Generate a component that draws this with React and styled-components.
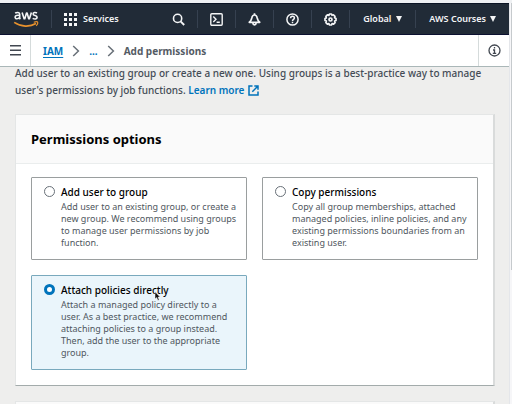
import React, { useState } from 'react';
import styled, { createGlobalStyle } from 'styled-components';

const GlobalStyle = createGlobalStyle`
  *, *::before, *::after { box-sizing: border-box; }
  html { overflow: hidden; }
  body {
    margin: 0;
    background: #eeeeed;
    color: #000;
    font-family: "Noto Sans", "Open Sans", sans-serif;
  }
  button, input { font: inherit; margin: 0; }
`;

const Frame = styled.div`
  min-height: 100vh;
  border-top: 3px solid #eff1f3;
  display: grid;
  grid-template-columns: minmax(0, 1fr) 3px;
`;

const Gutter = styled.div`
  background: linear-gradient(#c6cacd, #c6cacd) right top / 1px 267px no-repeat, #f6f6f8;
  border-left: 1px solid #e4e6ea;
`;

const Page = styled.div`
  display: flex;
  flex-direction: column;
`;

const TopNav = styled.nav`
  display: flex;
  align-items: center;
  height: 32px;
  background: #212b37;
  border-top: 1px solid #0b1424;
  border-bottom: 1px solid #0b1030;
  color: #f4f5f6;
`;

const NavButton = styled.button`
  display: flex;
  align-items: center;
  justify-content: center;
  gap: ${(p) => p.$gap || 0}px;
  height: 18px;
  padding: 0 ${(p) => p.$pad || 0}px;
  min-width: 38px;
  border: 0;
  border-left: ${(p) => (p.$divided ? '1px solid #364150' : '0')};
  background: none;
  color: inherit;
  font-size: 9px;
  line-height: 18px;
  font-weight: 600;
  white-space: nowrap;
`;

const LogoLink = styled.a`
  display: flex;
  justify-content: center;
  width: 51px;
  color: #f4f5f6;
`;

const Spacer = styled.div`
  flex: 1;
`;

const Caret = styled.span`
  border: 3px solid transparent;
  border-top: 6px solid currentColor;
  border-bottom: 0;
`;

const CrumbBar = styled.header`
  display: flex;
  align-items: stretch;
  position: relative;
  z-index: 1;
  height: 32px;
  background: #fff;
  border-bottom: 1px solid #aab7b8;
`;

const BarButton = styled.button`
  display: flex;
  align-items: center;
  justify-content: center;
  width: 31px;
  padding: 0;
  border: 0;
  border-${(p) => p.$edge}: 1px solid #d5dbdb;
  background: none;
  color: #414750;
`;

const Crumbs = styled.ol`
  flex: 1;
  display: flex;
  align-items: center;
  gap: 9px;
  margin: 0;
  padding: 0 12px;
  list-style: none;
  color: #545b64;
  font-size: 10px;
  line-height: 16px;
  font-weight: 700;

  li { display: flex; align-items: center; gap: 9px; }
`;

const CrumbLink = styled.a`
  color: #0073bb;
  text-decoration: ${(p) => (p.$underlined ? 'underline' : 'none')};
  text-underline-offset: 2px;
`;

const Main = styled.main`
  display: flex;
  flex-direction: column;
  gap: 15px;
  margin-top: -2px;
  padding: 0 14px 0 15px;
`;

const Intro = styled.p`
  margin: 0;
  color: #444c56;
  font-size: 10px;
  line-height: 17px;
  font-weight: 500;
`;

const LearnMore = styled.a`
  color: #0073bb;
  font-weight: 600;
  text-decoration: none;
  svg { vertical-align: -2px; margin-left: 4px; }
`;

const Card = styled.section`
  background: #fff;
  border: 1px solid #e4e6e6;
  border-right: 2px solid #d9dbdb;
  border-bottom: 1px solid #a3abab;
`;

const CardHeader = styled.div`
  padding: 15px;
  background: #fafafa;
  border-bottom: 1px solid #eaeded;
`;

const CardTitle = styled.h2`
  margin: 0;
  font-size: 13px;
  line-height: 18px;
  font-weight: 700;
`;

const OptionGrid = styled.div`
  display: grid;
  grid-template-columns: 1fr 1fr;
  gap: 15px;
  padding: 13px 15px 15px;
`;

const Option = styled.label`
  display: grid;
  grid-template-columns: 11px 1fr;
  column-gap: 6px;
  padding: 6px 8px 10px 12px;
  border: 1px solid ${(p) => (p.$selected ? '#79a9bd' : '#9a9e9f')};
  border-radius: 1px;
  background: ${(p) => (p.$selected ? '#eaf5fb' : '#fff')};
`;

const Radio = styled.input`
  appearance: none;
  width: 11px;
  height: 11px;
  border: 1px solid #687078;
  border-radius: 50%;
  background: #fff;
  &[type='radio'] { margin: 2px 0 0; }
  &:checked { border: 3px solid #0073bb; }
`;

const OptionText = styled.span`
  display: flex;
  flex-direction: column;
  gap: 1px;
`;

const OptionLabel = styled.span`
  font-size: 10px;
  line-height: 16px;
  font-weight: 500;
`;

const OptionDescription = styled.span`
  color: #4f5760;
  font-size: 9px;
  line-height: 12px;
`;

const Pointer = styled.svg`
  position: absolute;
  left: 154px;
  top: 291px;
  pointer-events: none;
`;

const AwsLogo = () => (
  <svg width="26" height="17" viewBox="0 0 26 17" fill="none" aria-label="aws" role="img">
    <g stroke="currentColor" strokeWidth="1.6" strokeLinejoin="round">
      <path d="M2.1 2.2C3.7 1.1 6.6 1 6.7 3.2V7.3L7.3 8.2M6.7 4.5C4.4 4 2.2 4.4 2.1 6.1C2 8.4 5.6 8.3 6.7 6.2" />
      <path d="M9.1 1.4L11.1 7.8H11.8L13.5 2H14.1L15.7 7.8H16.4L18.4 1.4" />
      <path d="M24 2C22.4 1.1 20.1 1.4 20.1 3C20.1 5 24.1 4.2 24.1 6.3C24.1 8.4 21.3 8.3 19.7 7.4" />
    </g>
    <path d="M1.2 11.4C8 16 16.7 16.2 23 12.6" stroke="#e8922e" strokeWidth="1.7" />
    <path d="M20.8 11.3C22.5 10.7 24.5 10.8 24.7 11.2C24.9 11.8 24.4 13.7 23.2 14.8" stroke="#e8922e" strokeWidth="1.2" />
  </svg>
);

const GridIcon = () => (
  <svg width="13" height="13" viewBox="0 0 13 13" fill="currentColor" aria-hidden="true">
    {[0, 5, 10].map((y) => [0, 5, 10].map((x) => <rect key={`${x}-${y}`} x={x} y={y} width="3" height="3" />))}
  </svg>
);

const Glyph = ({ size = 13, weight = 1.6, children }) => (
  <svg width={size} height={size} viewBox="0 0 13 13" fill="none" stroke="currentColor" strokeWidth={weight} aria-hidden="true">
    {children}
  </svg>
);

const SearchIcon = () => (
  <Glyph><circle cx="5.6" cy="5.4" r="4.1" /><path d="M8.6 8.4L12.2 12" strokeWidth="1.9" /></Glyph>
);
const TerminalIcon = () => (
  <Glyph weight={1.4}><rect x="0.8" y="0.8" width="11.4" height="11.4" rx="1" /><path d="M3.3 3.6L6 6.3L3.3 9M6.6 9.3H9.8" /></Glyph>
);
const BellIcon = () => (
  <Glyph weight={1.7}><path d="M6.5 0.3V2M1.3 9.3C3.4 7.8 3.4 6.5 3.8 4.9C4.2 3 5.2 2 6.5 2C7.8 2 8.8 3 9.2 4.9C9.6 6.5 9.6 7.8 11.7 9.3Z" strokeLinejoin="round" /><path d="M4.9 10C5 12.4 8 12.4 8.1 10" /></Glyph>
);
const HelpIcon = () => (
  <Glyph weight={1.5}><circle cx="6.5" cy="6.5" r="5.6" /><path d="M4.6 5.2C4.6 2.7 8.4 2.7 8.4 5C8.4 6.4 6.5 6.3 6.5 8M6.5 8.8V10.2" /></Glyph>
);
const GearIcon = () => (
  <Glyph weight={1.7}>
    <path d="M5.5 1H7.5L8 2.3L9.4 1.8L11 3.4L10.6 4.8L12 5.5V7.5L10.6 8.1L11.1 9.6L9.6 11.1L8.1 10.6L7.5 12H5.5L4.9 10.6L3.4 11.1L1.9 9.6L2.4 8.1L1 7.5V5.5L2.3 4.9L1.9 3.4L3.4 1.9L4.9 2.4Z" strokeLinejoin="round" />
    <circle cx="6.5" cy="6.5" r="1.5" />
  </Glyph>
);
const MenuIcon = () => (
  <Glyph><path d="M1 1.8H12M1 6.3H12M1 10.8H12" /></Glyph>
);
const InfoIcon = () => (
  <Glyph weight={1.3}><circle cx="6.5" cy="6.5" r="5.5" /><path d="M6.5 3V4.5M5 6H6.5V9.3M4.8 9.4H8.2" /></Glyph>
);
const Chevron = () => (
  <svg width="8" height="12" viewBox="0 0 8 12" fill="none" stroke="#687078" strokeWidth="1.5" aria-hidden="true">
    <path d="M1.2 1L6.4 6L1.2 11" />
  </svg>
);
const ExternalIcon = () => (
  <svg width="11" height="11" viewBox="0 0 11 11" fill="none" stroke="currentColor" strokeWidth="1.5" aria-hidden="true">
    <path d="M4.5 1H1V10H10V6.5M6.3 1H10V4.7M10 1L4.3 6.7" />
  </svg>
);

const OPTIONS = [
  { id: 'group', label: 'Add user to group', text: 'Add user to an existing group, or create a new group. We recommend using groups to manage user permissions by job function.' },
  { id: 'copy', label: 'Copy permissions', text: 'Copy all group memberships, attached managed policies, inline policies, and any existing permissions boundaries from an existing user.' },
  { id: 'attach', label: 'Attach policies directly', text: 'Attach a managed policy directly to a user. As a best practice, we recommend attaching policies to a group instead. Then, add the user to the appropriate group.' },
];

export default function App() {
  const [choice, setChoice] = useState('attach');
  return (
    <>
      <GlobalStyle />
      <Frame>
        <Page>
          <TopNav>
            <LogoLink href="#home"><AwsLogo /></LogoLink>
            <NavButton $divided $gap={6} $pad={12}><GridIcon />Services</NavButton>
            <Spacer />
            <NavButton aria-label="Search"><SearchIcon /></NavButton>
            <NavButton $divided aria-label="CloudShell"><TerminalIcon /></NavButton>
            <NavButton $divided aria-label="Notifications"><BellIcon /></NavButton>
            <NavButton $divided aria-label="Help"><HelpIcon /></NavButton>
            <NavButton $divided aria-label="Settings"><GearIcon /></NavButton>
            <NavButton $divided $gap={5} $pad={13}>Global<Caret /></NavButton>
            <NavButton $divided $gap={4} $pad={13}>AWS Courses<Caret /></NavButton>
          </TopNav>
          <CrumbBar>
            <BarButton $edge="right" aria-label="Open navigation"><MenuIcon /></BarButton>
            <Crumbs>
              <li><CrumbLink href="#iam" $underlined>IAM</CrumbLink><Chevron /></li>
              <li><CrumbLink href="#users">...</CrumbLink><Chevron /></li>
              <li aria-current="page">Add permissions</li>
            </Crumbs>
            <BarButton $edge="left" aria-label="Information"><InfoIcon /></BarButton>
          </CrumbBar>
          <Main>
            <Intro>
              Add user to an existing group or create a new one. Using groups is a best-practice way to manage user's permissions by job functions. <LearnMore href="#learn">Learn more<ExternalIcon /></LearnMore>
            </Intro>
            <Card>
              <CardHeader><CardTitle>Permissions options</CardTitle></CardHeader>
              <OptionGrid>
                {OPTIONS.map(({ id, label, text }) => (
                  <Option key={id} $selected={choice === id}>
                    <Radio type="radio" name="permissions" checked={choice === id} onChange={() => setChoice(id)} />
                    <OptionText>
                      <OptionLabel>{label}</OptionLabel>
                      <OptionDescription>{text}</OptionDescription>
                    </OptionText>
                  </Option>
                ))}
              </OptionGrid>
            </Card>
            <Card><CardHeader /></Card>
          </Main>
        </Page>
        <Gutter />
      </Frame>
      <Pointer width="7" height="10" viewBox="0 0 7 10" aria-hidden="true">
        <path d="M1 0.8V8L2.6 6.6L4 9.4L5.2 8.8L4 6.1H6.2Z" fill="#111" stroke="#fff" strokeWidth="0.5" />
      </Pointer>
    </>
  );
}
